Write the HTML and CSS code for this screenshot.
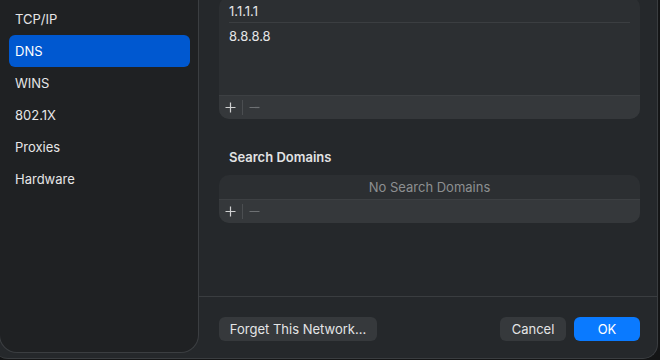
FILE: index.html
```html
<!doctype html>
<html lang="en">
	<head>
		<meta charset="UTF-8">
		<title>DNS</title>
		<link rel="stylesheet" href="styles.css">
	</head>
	<body>
		<div class="window">
			<div class="sidebar">
				<ul class="nav">
					<li>TCP/IP</li>
					<li class="active">DNS</li>
					<li>WINS</li>
					<li>802.1X</li>
					<li>Proxies</li>
					<li>Hardware</li>
				</ul>
			</div>

			<div class="main">
				<div class="content">
					<div class="box servers">
						<ul class="rows">
							<li>1.1.1.1</li>
							<li>8.8.8.8</li>
						</ul>
						<div class="tools">
							<svg class="plus" width="11" height="11" viewBox="0 0 11 11"><path d="M5.5 0.5v10M0.5 5.5h10" stroke="#cfd0d1" stroke-width="1.2" fill="none"/></svg>
							<span class="sep"></span>
							<svg class="minus" width="11" height="11" viewBox="0 0 11 11"><path d="M0.5 5.5h10" stroke="#6d7073" stroke-width="1.2" fill="none"/></svg>
						</div>
					</div>

					<h3 class="label">Search Domains</h3>
					<div class="box">
						<div class="empty">No Search Domains</div>
						<div class="tools">
							<svg class="plus" width="11" height="11" viewBox="0 0 11 11"><path d="M5.5 0.5v10M0.5 5.5h10" stroke="#cfd0d1" stroke-width="1.2" fill="none"/></svg>
							<span class="sep"></span>
							<svg class="minus" width="11" height="11" viewBox="0 0 11 11"><path d="M0.5 5.5h10" stroke="#6d7073" stroke-width="1.2" fill="none"/></svg>
						</div>
					</div>
				</div>

				<div class="footer">
					<button class="btn forget">Forget This Network...</button>
					<span class="grow"></span>
					<button class="btn">Cancel</button>
					<button class="btn ok">OK</button>
				</div>
			</div>
		</div>
	</body>
</html>
```

FILE: styles.css
```css
html,body{margin:0;padding:0;}
body{background:#141516;width:660px;height:360px;overflow:hidden;font-family:Inter,"Liberation Sans",sans-serif;font-size:13px;color:#e2e3e4;}
ul,li{margin:0;padding:0;list-style-type:none;}
h3{margin:0;padding:0;}

.window{display:flex;width:665px;height:369px;margin:-10px 0 0 -7px;background:#25282b;border-radius:0 0 15px 15px;box-sizing:border-box;border-right:1px solid #3a3d40;border-bottom:1px solid #3a3d40;}

.sidebar{width:200px;margin:0 0 5px 6px;background:#1f2123;border:1px solid #3b3e41;border-top:none;border-radius:0 0 18px 18px;box-sizing:border-box;padding-top:13px;}
.nav li{height:32px;line-height:32px;margin:0 8px 0 9px;padding-left:6px;border-radius:6px;color:#e6e6e7;}
.nav li.active{background:#0058d0;color:#fff;}

.main{flex:1;display:flex;flex-direction:column;}
.content{flex:1;padding:7px 17px 0 20px;}

.box{background:#2c2f32;border-radius:10px;overflow:hidden;}
.servers{height:122px;display:flex;flex-direction:column;}
.rows{flex:1;padding:0 10px;}
.rows li{height:22px;line-height:22px;padding-top:3px;color:#e4e5e6;}
.rows li+li{border-top:1px solid #3b3e41;height:24px;line-height:26px;padding-top:0;}

.tools{height:24px;display:flex;align-items:center;background:#35383b;border-top:1px solid #3d4043;box-sizing:border-box;padding-left:6px;}
.tools .sep{width:1px;height:15px;background:#4b4e51;margin:0 6px;}

.label{font-size:13px;font-weight:600;color:#e2e3e4;padding:31px 10px 0;height:25px;line-height:14px;}
.empty{height:24px;line-height:24px;text-align:center;color:#8d8f91;}

.footer{height:62px;border-top:1px solid #3a3d40;box-sizing:border-box;display:flex;align-items:flex-start;padding:20px 17px 0 20px;gap:8px;}
.grow{flex:1;}
.btn{height:24px;border:none;border-radius:6px;background:#36393c;color:#e4e5e6;font-family:inherit;font-size:13px;padding:0 10px;white-space:nowrap;}
.btn.forget{width:158px;}
.btn:not(.forget){width:66px;}
.btn.ok{background:#0a7aff;color:#fff;}
```
